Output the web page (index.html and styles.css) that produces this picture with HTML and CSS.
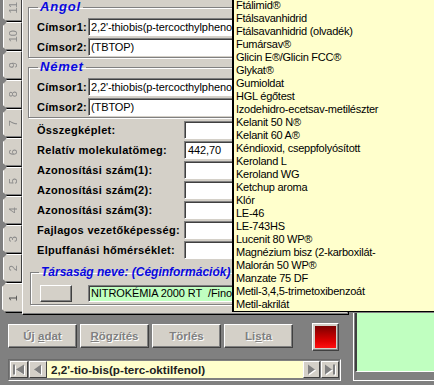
FILE: index.html
```html
<!DOCTYPE html>
<html lang="hu">
<head>
<meta charset="utf-8">
<title>Anyagok</title>
<link rel="stylesheet" href="styles.css">
</head>
<body>
<div class="app">
  <div class="top">
    <div class="tabs">
      <div class="tab"><span>11</span></div>
      <div class="tab"><span>10</span></div>
      <div class="tab"><span>9</span></div>
      <div class="tab"><span>8</span></div>
      <div class="tab"><span>7</span></div>
      <div class="tab"><span>6</span></div>
      <div class="tab"><span>5</span></div>
      <div class="tab"><span>4</span></div>
      <div class="tab"><span>3</span></div>
      <div class="tab"><span>2</span></div>
      <div class="tab sel"><span>1</span></div>
    </div>
    <div class="panel">
      <fieldset class="grp grp-lang">
        <legend>Angol</legend>
        <div class="frow"><span class="flbl">Címsor1:</span><span class="inp wide">2,2'-thiobis(p-tercocthylphenol)</span></div>
        <div class="frow"><span class="flbl">Címsor2:</span><span class="inp wide">(TBTOP)</span></div>
      </fieldset>
      <fieldset class="grp grp-lang">
        <legend>Német</legend>
        <div class="frow"><span class="flbl">Címsor1:</span><span class="inp wide">2,2'-thiobis(p-tercocthylphenol)</span></div>
        <div class="frow"><span class="flbl">Címsor2:</span><span class="inp wide">(TBTOP)</span></div>
      </fieldset>
      <div class="fields">
        <div class="row"><span class="lbl">Összegképlet:</span><span class="inp num"></span></div>
        <div class="row"><span class="lbl">Relatív molekulatömeg:</span><span class="inp num">442,70</span></div>
        <div class="row"><span class="lbl">Azonosítási szám(1):</span><span class="inp num"></span></div>
        <div class="row"><span class="lbl">Azonosítási szám(2):</span><span class="inp num"></span></div>
        <div class="row"><span class="lbl">Azonosítási szám(3):</span><span class="inp num"></span></div>
        <div class="row"><span class="lbl">Fajlagos vezetőképesség:</span><span class="inp num"></span></div>
        <div class="row"><span class="lbl">Elpuffanási hőmérséklet:</span><span class="inp num"></span></div>
      </div>
      <fieldset class="grp grp-co">
        <legend>Társaság neve: (Céginformációk)</legend>
        <div class="corow"><span class="btn-sm"></span><span class="inp green">NITROKÉMIA 2000 RT&nbsp;&nbsp;/Finom</span></div>
      </fieldset>
    </div>
  </div>
  <div class="bottom">
    <div class="left">
      <div class="actions">
        <button class="act">Új <u>a</u>dat</button>
        <button class="act"><u>R</u>ögzítés</button>
        <button class="act">Törlés</button>
        <button class="act">Li<u>s</u>ta</button>
        <span class="stop"><span class="stop-red"></span></span>
      </div>
      <div class="nav">
        <span class="nb"><svg width="16" height="15" viewBox="0 0 16 15"><g fill="#fff" transform="translate(1,1)"><rect x="2" y="2.5" width="2" height="10"/><polygon points="13,2.5 5,7.5 13,12.5"/></g><g fill="#808080"><rect x="2" y="2.5" width="2" height="10"/><polygon points="13,2.5 5,7.5 13,12.5"/></g></svg></span>
        <span class="nb nb2"><svg width="16" height="15" viewBox="0 0 16 15"><polygon fill="#fff" points="12,3.5 5,8.5 12,13.5"/><polygon fill="#808080" points="11,2.5 4,7.5 11,12.5"/></svg></span>
        <span class="nfield">2,2'-tio-bis(p-terc-oktilfenol)</span>
        <span class="nb nb3"><svg width="15" height="15" viewBox="0 0 15 15"><polygon fill="#fff" points="5,3.5 12,8.5 5,13.5"/><polygon fill="#808080" points="4,2.5 11,7.5 4,12.5"/></svg></span>
        <span class="nb nb2"><svg width="16" height="15" viewBox="0 0 16 15"><g fill="#fff" transform="translate(1,1)"><polygon points="3,2.5 10,7.5 3,12.5"/><rect x="11" y="2.5" width="2" height="10"/></g><g fill="#808080"><polygon points="3,2.5 10,7.5 3,12.5"/><rect x="11" y="2.5" width="2" height="10"/></g></svg></span>
      </div>
    </div>
    <div class="sub"><div class="sub-inner"></div></div>
  </div>
  <ul class="list">
    <li>Ftálimid®</li>
    <li>Ftálsavanhidrid</li>
    <li>Ftálsavanhidrid (olvadék)</li>
    <li>Fumársav®</li>
    <li>Glicin E®/Glicin FCC®</li>
    <li>Glykat®</li>
    <li>Gumioldat</li>
    <li>HGL égőtest</li>
    <li>Izodehidro-ecetsav-metilészter</li>
    <li>Kelanit 50 N®</li>
    <li>Kelanit 60 A®</li>
    <li>Kéndioxid, cseppfolyósított</li>
    <li>Keroland L</li>
    <li>Keroland WG</li>
    <li>Ketchup aroma</li>
    <li>Klór</li>
    <li>LE-46</li>
    <li>LE-743HS</li>
    <li>Lucenit 80 WP®</li>
    <li>Magnézium bisz (2-karboxilát-</li>
    <li>Malorán 50 WP®</li>
    <li>Manzate 75 DF</li>
    <li>Metil-3,4,5-trimetoxibenzoát</li>
    <li>Metil-akrilát</li>
  </ul>
</div>
</body>
</html>
```
FILE: styles.css
```css
* { box-sizing: border-box; }
html, body { margin: 0; padding: 0; }
body {
  font-family: "Liberation Sans", Arial, sans-serif;
  font-size: 11px;
  color: #000;
  background: #808080;
}
.app {
  position: relative;
  width: 434px;
  height: 385px;
  overflow: hidden;
  background: #808080;
}
.top {
  display: flex;
  height: 315px;
}
/* vertical tabs */
.tabs {
  flex: none;
  width: 22px;
  height: 313px;
  display: flex;
  flex-direction: column;
  justify-content: flex-end;
  overflow: hidden;
}
.tab {
  flex: none;
  height: 29px;
  margin-left: 3px;
  background: #d4d0c8;
  border-left: 1px solid #fff;
  border-top: 1px solid #fff;
  border-bottom: 1px solid #000;
  border-right: 1px solid #404040;
  box-shadow: inset 0 -1px 0 #808080;
  clip-path: polygon(4px 0, 100% 0, 100% 100%, 4px 100%, 0 calc(100% - 4px), 0 4px);
  display: flex;
  align-items: center;
  justify-content: center;
}
.tab span {
  writing-mode: vertical-rl;
  transform: rotate(180deg);
  font-size: 11px;
  line-height: 12px;
  color: #8a8a8a;
}
.tab.sel {
  margin-left: 2px;
  border-right: none;
  height: 30px;
}
.tab.sel span { color: #505050; }

/* main panel */
.panel {
  flex: none;
  width: 327px;
  height: 315px;
  background: #d4d0c8;
  border-left: 1px solid #fff;
  border-right: 1px solid #000;
  border-bottom: 1px solid #000;
  box-shadow: inset -1px -1px 0 #808080;
}
.grp {
  min-width: 0;
  margin: 0 4px 0 5px;
  padding: 4px 0 1px 8px;
  border: 1px solid #808080;
  box-shadow: inset 1px 1px 0 #fff, 1px 1px 0 #fff;
}
.grp legend {
  margin-left: 1px;
  padding: 0 2px;
  font-weight: bold;
  font-style: italic;
  color: #0808e0;
  line-height: 14px;
}
.grp-lang { margin-bottom: 2px; }
.grp-lang legend {
  font-size: 13px;
  letter-spacing: 0.8px;
}
.frow {
  display: flex;
  align-items: center;
  height: 18px;
  margin-bottom: 2px;
}
.frow:last-child { margin-bottom: 0; }
.flbl, .lbl {
  flex: none;
  font-weight: bold;
  font-size: 11px;
  letter-spacing: 0.3px;
  white-space: nowrap;
}
.flbl { width: 51px; }
.lbl { width: 147px; }
.inp {
  flex: none;
  display: block;
  height: 18px;
  background: #fff;
  border: 1px solid;
  border-color: #808080 #fff #fff #808080;
  box-shadow: inset 1px 1px 0 #404040;
  padding: 0 1px 0 2px;
  font-size: 11px;
  letter-spacing: -0.1px;
  line-height: 16px;
  white-space: nowrap;
  overflow: hidden;
}
.wide { width: 260px; }
.num { width: 60px; padding-left: 3px; }
.fields { margin: 3px 0 0 14px; }
.row {
  display: flex;
  align-items: center;
  height: 18px;
  margin-bottom: 2px;
}
.row:last-child { margin-bottom: 0; }
.grp-co {
  margin: 6px 4px 0 7px;
  padding: 6px 0 2px 7px;
}
.grp-co legend {
  font-size: 12px;
  letter-spacing: 0;
}
.corow {
  display: flex;
  align-items: flex-start;
}
.btn-sm {
  flex: none;
  width: 32px;
  height: 17px;
  margin-left: 2px;
  background: #d4d0c8;
  border: 1px solid;
  border-color: #fff #404040 #404040 #fff;
  box-shadow: inset -1px -1px 0 #808080;
}
.green {
  width: 146px;
  height: 17px;
  margin: 0 0 0 16px;
  background: #c0ffc0;
  line-height: 15px;
}

/* bottom */
.bottom {
  display: flex;
  height: 70px;
}
.left {
  flex: none;
  width: 353px;
}
.actions {
  display: flex;
  align-items: flex-start;
  height: 36px;
  padding: 8px 0 0 8px;
}
.act {
  flex: none;
  width: 69px;
  height: 24px;
  margin: 1px 3px 0 0;
  padding: 0;
  background: #d4d0c8;
  border: 1px solid;
  border-color: #fff #404040 #404040 #fff;
  box-shadow: inset -1px -1px 0 #808080;
  font-family: "Liberation Sans", Arial, sans-serif;
  font-weight: bold;
  font-size: 11.5px;
  color: #808080;
  text-shadow: 1px 1px 0 #fff;
}
.act u { text-decoration-thickness: 1px; }
.stop {
  flex: none;
  width: 27px;
  height: 28px;
  margin-left: 16px;
  padding: 2px;
  background: #d4d0c8;
  border: 1px solid;
  border-color: #fff #404040 #404040 #fff;
  box-shadow: inset -1px -1px 0 #808080;
}
.stop-red {
  display: block;
  width: 100%;
  height: 100%;
  background: linear-gradient(#7a0000, #e00000 70%, #ff1010);
}
.nav {
  display: flex;
  width: 333px;
  height: 22px;
  margin: 8px 0 0 8px;
  padding: 1px;
  border: 1px solid;
  border-color: #6a6a6a #fff #fff #6a6a6a;
}
.nb {
  flex: none;
  width: 18px;
  height: 17px;
  background: #d4d0c8;
  border: 1px solid;
  border-color: #fff #404040 #404040 #fff;
  display: flex;
}
.nb svg { display: block; }
.nb2 { margin-left: 1px; }
.nb3 { width: 17px; }
.nfield {
  flex: 1;
  min-width: 0;
  height: 17px;
  background: #ffffcc;
  padding-left: 4px;
  font-weight: bold;
  font-size: 11.7px;
  line-height: 17px;
  color: #222;
  white-space: nowrap;
  overflow: hidden;
}
.sub {
  flex: none;
  width: 81px;
  height: 68px;
  margin-top: -2px;
  border-left: 1px solid #fff;
  border-bottom: 1px solid #fff;
}
.sub-inner {
  height: 59px;
  margin-left: 1px;
  background: #c0ffc0;
  border-left: 2px solid #404040;
  border-bottom: 1px solid #fff;
}

/* dropdown list */
.list {
  position: absolute;
  left: 232px;
  top: -1px;
  width: 204px;
  margin: 0;
  padding: 0 0 0 2px;
  list-style: none;
  background: #ffffcc;
  border-left: 2px solid #000;
  border-bottom: 1px solid #000;
  font-size: 11px;
  line-height: 13px;
  letter-spacing: -0.25px;
  white-space: nowrap;
  overflow: hidden;
}
.list li { height: 13px; }
```
